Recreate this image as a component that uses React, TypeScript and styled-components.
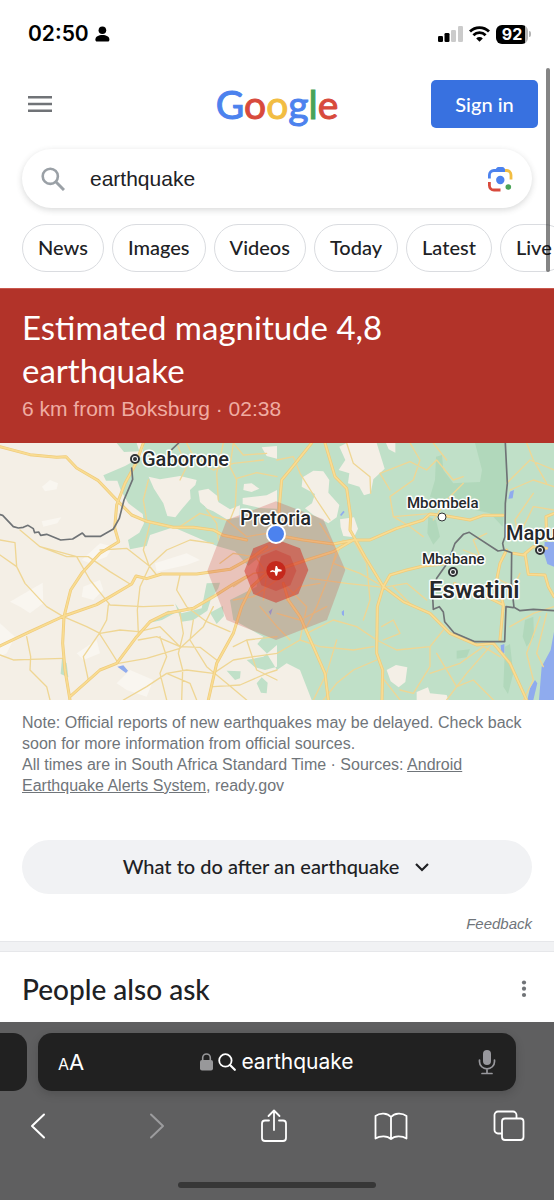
import React from "react";
import styled, { createGlobalStyle } from "styled-components";

const display = `Lato, "Open Sans", sans-serif`;
const body = `"Liberation Sans", Arial, sans-serif`;
const system = `Inter, "Liberation Sans", sans-serif`;

const GlobalStyle = createGlobalStyle`
  *, *::before, *::after { box-sizing: border-box; }
  body { margin: 0; background: #fff; color: #202124; font-family: ${body}; }
  button, input { font: inherit; color: inherit; border: 0; background: none; padding: 0; margin: 0; }
  h1, h2, p { margin: 0; font-weight: 400; }
  a { color: inherit; }
  svg { display: block; flex: none; }
`;

const Screen = styled.div`
  position: relative;
  display: flex;
  flex-direction: column;
  min-height: 100vh;
  overflow: hidden;
`;

const StatusBar = styled.div`
  display: flex;
  align-items: center;
  justify-content: space-between;
  height: 68px;
  padding: 0 23px 0 28px;
  font-family: ${system};
  color: #000;
`;

const StatusGroup = styled.div<{ $gap: number }>`
  display: flex;
  align-items: center;
  gap: ${(p) => p.$gap}px;
`;

const Clock = styled.time`
  font-size: 21px;
  font-weight: 600;
  line-height: 24px;
`;

const Battery = styled.div`
  display: flex;
  align-items: center;
  gap: 1px;
`;

const BatteryLevel = styled.span`
  display: flex;
  align-items: center;
  justify-content: center;
  width: 32px;
  height: 19px;
  border-radius: 6px;
  background: linear-gradient(to right, #000 92%, #b4b4b4 92%);
  color: #fff;
  font-size: 16px;
  font-weight: 700;
  line-height: 19px;
`;

const BatteryCap = styled.span`
  width: 2px;
  height: 6px;
  border-radius: 0 2px 2px 0;
  background: #b4b4b4;
`;

const Scrollbar = styled.div`
  position: absolute;
  top: 68px;
  right: 4px;
  width: 4px;
  height: 204px;
  border-radius: 2px;
  background: rgba(0, 0, 0, 0.48);
`;

const Header = styled.header`
  display: grid;
  grid-template-columns: 1fr auto 1fr;
  align-items: center;
  padding: 12px 16px 0;
`;

const IconButton = styled.button`
  display: flex;
  align-items: center;
  justify-content: center;
  justify-self: start;
`;

const MenuButton = styled(IconButton)`
  width: 48px;
  height: 48px;
`;

const Logo = styled.a`
  font-family: ${display};
  font-size: 39px;
  line-height: 48px;
  text-decoration: none;
`;

const LogoLetter = styled.span<{ $color: string }>`
  color: ${(p) => p.$color};
  -webkit-text-stroke: 1px ${(p) => p.$color};
`;

const SignIn = styled.button`
  justify-self: end;
  width: 107px;
  height: 48px;
  border-radius: 5px;
  background: #3871e0;
  color: #fff;
  font-family: ${display};
  font-size: 20px;
  font-weight: 500;
`;

const SearchForm = styled.form`
  display: flex;
  align-items: center;
  height: 59px;
  margin: 21px 22px 0;
  padding: 0 19px;
  border-radius: 30px;
  background: #fff;
  box-shadow: 0 2px 6px rgba(60, 64, 67, 0.2);
`;

const SearchInput = styled.input`
  flex: 1;
  min-width: 0;
  margin-left: 25px;
  font-size: 21px;
  outline: none;
`;

const Chips = styled.nav`
  display: flex;
  gap: 8px;
  padding: 16px 0 16px 22px;
  overflow: hidden;
`;

const Chip = styled.a`
  flex: none;
  height: 48px;
  padding: 0 15px;
  border: 1px solid #dadce0;
  border-radius: 24px;
  font-family: ${display};
  font-size: 20px;
  font-weight: 500;
  line-height: 45px;
  text-decoration: none;
`;

const Alert = styled.section`
  padding: 17px 22px 20px;
  border-top: 1px solid #c9574d;
  background: #b23329;
  color: #fff;
`;

const AlertTitle = styled.h1`
  max-width: 420px;
  font-family: ${display};
  font-size: 33px;
  line-height: 43px;
`;

const AlertMeta = styled.p`
  padding-top: 3px;
  font-size: 21px;
  line-height: 28px;
  color: #efaca2;
`;

const MapSvg = styled.svg`
  width: 100%;
  height: 257px;
`;

const MapLabel = styled.text<{ $size: number; $weight?: number }>`
  font-family: Roboto, sans-serif;
  font-size: ${(p) => p.$size}px;
  font-weight: ${(p) => p.$weight ?? 500};
  fill: #25282b;
  stroke: #fff;
  stroke-width: 3px;
  stroke-linejoin: round;
  paint-order: stroke;
`;

const Note = styled.p`
  padding: 12px 22px 0;
  font-size: 16px;
  line-height: 21px;
  color: #70757a;
`;

const Expander = styled.button`
  display: flex;
  align-items: center;
  justify-content: center;
  gap: 14px;
  height: 54px;
  margin: 44px 22px 0;
  padding-bottom: 3px;
  border-radius: 27px;
  background: #f1f2f4;
  font-family: ${display};
  font-size: 20px;
  font-weight: 500;
`;

const Feedback = styled.a`
  align-self: flex-end;
  margin: 20px 22px 7px;
  font-size: 15px;
  font-style: italic;
  line-height: 20px;
  color: #70757a;
  text-decoration: none;
`;

const Divider = styled.div`
  height: 11px;
  border: 1px solid #e6e7ea;
  border-width: 1px 0;
  background: #f1f2f4;
`;

const AskRow = styled.section`
  display: flex;
  flex: 1;
  align-items: center;
  justify-content: space-between;
  min-height: 66px;
  padding: 4px 22px 0;
`;

const AskTitle = styled.h2`
  font-family: ${display};
  font-size: 28px;
  font-weight: 500;
  line-height: 32px;
`;

const BrowserBar = styled.footer`
  padding-top: 11px;
  background: #5f5f60;
  color: #fff;
  font-family: ${system};
`;

const TabStrip = styled.div`
  display: flex;
  gap: 11px;
  padding-right: 38px;
`;

const NeighbourTab = styled.div`
  width: 27px;
  height: 58px;
  border-radius: 0 14px 14px 0;
  background: #212121;
`;

const AddressBar = styled.div`
  display: grid;
  flex: 1;
  grid-template-columns: 1fr auto 1fr;
  align-items: center;
  height: 58px;
  padding: 0 20px;
  border-radius: 14px;
  background: #212121;
  box-shadow: 0 3px 10px rgba(0, 0, 0, 0.15);
`;

const TextSize = styled.button`
  justify-self: start;
  padding-top: 2px;
  font-size: 22px;
  line-height: 26px;
`;

const SmallA = styled.span`
  font-size: 16px;
`;

const Address = styled.button`
  display: flex;
  align-items: center;
  gap: 5px;
  font-size: 21px;
  line-height: 28px;
`;

const MicButton = styled.button`
  justify-self: end;
`;

const Toolbar = styled.div`
  display: flex;
  align-items: center;
  justify-content: space-between;
  height: 70px;
  padding: 0 21px 0 14px;
`;

const ToolButton = styled(IconButton)`
  width: 48px;
  height: 48px;
`;

const HomeIndicator = styled.div`
  width: 198px;
  height: 6px;
  margin: 21px auto 12px;
  border-radius: 3px;
  background: #373737;
`;

const LOGO: [string, string][] = [
  ["G", "#4c82ee"],
  ["o", "#d84a3c"],
  ["o", "#f2bd42"],
  ["g", "#4c82ee"],
  ["l", "#4aa358"],
  ["e", "#d84a3c"],
];

const CHIPS = ["News", "Images", "Videos", "Today", "Latest", "Live"];

const GREEN_LAND = [
  "M350 9H410L418 34 372 36Z",
  "M432 9 425 50 375 78 310 106 318 122 352 122 362 150 385 190 428 222 432 250 418 278 384 300 390 328 440 318 450 285 520 262 600 296 650 318 705 334 745 378 780 350 770 440 690 480 700 540 790 590 772 612 800 640 831 690 860 670 900 690 935 780H1662V9Z",
  "M450 548 505 512 530 516 486 540Z",
  "M525 490 545 520 605 505 620 430 660 428 655 445 632 480 622 512 580 540 545 545Z",
  "M630 518 668 498 672 528 650 552Z",
  "M740 660 790 650 831 615 831 680 795 690 765 682Z",
  "M680 692 722 694 720 715 705 720Z",
  "M785 712 803 728 800 760 783 758 770 730Z",
  "M186 655 200 670 205 712 182 702Z",
];

const CREAM_LAND = [
  "M446 110 480 118 540 108 590 120 586 135 570 150 572 176 545 208 526 232 502 228 490 190 462 146Z",
  "M595 152 625 146 652 168 655 186 690 208 720 196 718 232 680 238 640 214 622 206 600 186Z",
  "M732 132 755 130 778 146 755 156 730 150Z",
  "M728 174 800 166 831 150 831 206 780 204 728 192Z",
  "M785 22 831 18V56L800 48Z",
  "M1018 20 1040 9H1130L1154 86 1120 118 1112 160 1092 166 1078 140 1044 130 1048 100 1016 90 1036 60Z",
  "M908 112 940 92 970 94 988 120 985 158 1018 195 1010 232 985 250 940 225 915 205 936 190 945 162 905 140Z",
  "M1020 238 1062 232 1074 266 1062 292 1030 288 1022 262Z",
  "M1158 9H1186V38L1166 28Z",
  "M1160 690 1188 675 1222 682 1216 726 1196 742 1172 724Z",
  "M1250 756 1284 742 1290 760 1340 765 1345 780H1250Z",
];

const PALE_PATCHES = [
  "M126 140 150 120 174 130 170 148 135 154Z",
  "M125 244 184 232 172 250 130 260Z",
  "M245 360 300 310 340 320 320 350 270 370Z",
  "M30 485 128 428 130 490 90 520 60 500Z",
  "M250 440 300 420 310 450 280 480 245 470Z",
  "M0 550 45 590 20 640 0 650Z",
  "M350 730 390 690 460 720 440 770 380 750Z",
  "M230 640 290 600 300 640 250 660Z",
  "M465 370 560 340 600 360 560 375 470 395Z",
];

const DEEP_GREEN = [
  "M1425 9H1516L1522 120 1508 260 1470 220 1380 200 1290 170 1305 120 1308 50 1326 45 1330 90 1360 130 1385 128 1440 126 1446 90Z",
  "M1285 230 1308 240 1320 290 1300 314 1282 280Z",
  "M1575 540 1600 530 1602 590 1580 620 1568 590Z",
  "M1515 620 1530 612 1540 700 1524 762 1510 740Z",
  "M1370 632 1410 628 1400 652 1370 656Z",
  "M598 170 620 148 648 168 638 196 612 200Z",
];

const MINOR_ROADS = [
  "M0 300 45 308 50 380 75 430 140 500 190 530",
  "M0 345 50 380M60 270 120 320 200 350 265 350 330 395 390 432",
  "M120 320 230 350 270 420 310 470 330 495 430 500 520 496",
  "M450 250 430 330 448 380 420 440 412 510 415 580",
  "M300 330 380 325 448 378 470 405M448 378 500 330 570 300 640 310",
  "M190 530 260 560 300 580 360 570 415 575 480 560 540 620",
  "M325 495 320 540 298 580 250 650 265 720M298 580 330 630 355 670",
  "M80 590 92 650 90 690 140 740 150 780M0 645 40 660 90 658 190 655",
  "M540 405 530 450 560 500 620 545 690 575",
  "M540 520 550 580 535 640 548 690 545 780",
  "M370 780 440 740 500 700 560 690 640 700 700 660 760 650 831 640",
  "M415 600 470 590 540 620 600 622 650 660",
  "M480 590 500 650 480 700 500 780M355 670 440 655 540 625 610 560 640 500",
  "M580 540 570 600 620 680 680 730 740 780M590 780 570 730 500 700",
  "M700 620 740 600 831 590M740 600 770 690 831 720M640 740 720 735 800 700 831 690",
  "M445 120 430 180 440 240M540 120 560 80 530 9M655 180 650 100 670 9",
  "M700 9 690 80 710 120 706 200 690 240M710 115 770 98 831 110",
  "M560 9 580 50 640 90 700 70 790 60M620 210 650 250 655 300",
  "M700 9 730 45 800 40M540 260 600 220 680 240",
  "M831 320 760 350 700 340 660 370M680 240 740 290 800 280",
  "M831 60 880 50 900 100 950 180 990 240M1040 9 1060 70 1110 110 1112 160",
  "M1170 150 1140 100 1230 65 1280 90 1310 60 1360 120 1390 110",
  "M1230 9 1260 60 1240 120 1170 170 1180 230 1230 260 1270 290",
  "M1180 230 1300 220M1340 60 1300 9M1390 130 1340 180 1300 240",
  "M1060 300 1100 370 1110 480 1090 540M930 415 1040 430 1150 442 1220 430 1280 480",
  "M960 250 1010 330 990 400 950 500 920 560M1030 300 1000 370 1080 400 1150 440",
  "M920 580 1000 540 1070 560 1130 600 1190 630 1290 620 1330 570",
  "M831 640 900 600 960 620 1060 630 1120 620M900 600 920 500 850 430",
  "M970 780 1010 730 1060 690 1130 660M1145 710 1200 780M1010 600 980 700 940 780",
  "M1290 620 1290 680 1240 760 1200 750M1290 700 1380 670 1450 620 1500 650",
  "M1145 560 1180 540 1200 580 1150 600M1180 440 1240 500 1290 520",
  "M1310 640 1370 740 1420 720 1480 780M1470 620 1400 700 1340 780",
  "M1390 330 1440 350 1420 300 1460 280M1450 460 1500 420 1540 440 1560 400",
  "M1520 130 1590 60 1662 90M1530 150 1600 120 1662 140M1580 9 1600 60 1640 130",
  "M1560 280 1600 200 1662 210M1560 300 1545 240 1600 160M1530 560 1600 520 1662 500",
  "M1620 530 1580 640 1600 720 1570 780M1640 520 1610 640 1630 680",
  "M700 440 760 400 831 392M831 420 760 470 700 480M760 340 800 400 790 480",
  "M860 480 900 440 960 430M831 520 900 540 980 500M780 500 831 560 870 600",
];

const MAJOR_ROADS = [
  "M0 20 90 44 170 52 198 50 230 84 295 122 350 180 395 225 440 244 520 262 580 262 640 270 670 286 740 300",
  "M430 9 408 70 375 130 350 195 344 264 356 305 300 340 245 400 212 450 192 530 188 610 195 690 210 780",
  "M0 618 90 575 192 528 290 494 395 432 408 408 440 416 485 402 590 402 690 388 760 350 800 320",
  "M210 770 300 690 350 670 410 590 450 545 500 520 580 505 640 470 700 432 740 410",
  "M625 780 650 670 700 580 725 500 755 440 800 400",
  "M935 9 870 90 845 120 838 200 834 300",
  "M975 9 1005 110 1040 145 1052 230 1050 270 1070 305 1095 350 1150 440 1210 485 1290 520 1350 580 1430 615 1480 610 1530 670 1580 780",
  "M855 290 910 300 1000 312 1060 300 1110 300 1190 265 1270 240 1290 222 1340 228 1410 240 1450 226 1510 226",
  "M831 390 920 360 1000 335 1060 300",
  "M1150 440 1132 500 1130 640 1148 690 1146 780",
  "M1150 440 1170 405 1220 390 1270 378 1330 372",
  "M1364 430 1390 450 1440 460 1510 495 1500 600",
  "M1510 495 1490 420 1500 370 1520 330M1540 340 1570 345 1600 320 1640 325",
  "M1575 340 1585 403 1635 405 1645 440 1662 470M1640 300 1638 230 1662 220",
  "M850 430 865 480 900 530 940 620 975 700 985 780",
];

const BORDERS = [
  "M0 224 8 226 40 260 55 264 70 262 84 256 100 266 104 278 116 276 122 286 140 283 182 300 218 297 247 279 256 289 302 289 340 267 358 235 372 180 398 118 395 84 M515 29 536 9",
  "M1516 9 1522 130 1516 190 1515 290 1508 310 1512 330 1535 338 1534 430 1542 502 1560 512 1600 508 1662 512",
  "M1512 330 1494 333 1408 277 1390 283 1365 310 1345 365 1310 415 1298 470 1300 508 1318 500 1330 516 1334 545 1362 578 1425 605H1514L1518 500 1540 503",
];

const WATER = [
  "M1662 306H1634L1632 340 1642 372 1662 380Z",
  "M1662 575 1652 630 1625 680 1617 780H1662Z",
  "M1582 780 1590 745 1605 720 1612 730 1600 780Z",
  "M352 680 370 676 384 692 378 699Z",
  "M1020 225 1030 212 1034 216 1024 228Z",
  "M1025 515 1032 510 1032 528 1026 524Z",
  "M806 515 818 505 812 525Z",
  "M1530 155 1542 150 1538 175 1525 176Z",
  "M1502 616 1513 612V638L1504 640Z",
];

function QuakeMap() {
  return (
    <MapSvg viewBox="0 0 554 257" preserveAspectRatio="xMidYMid slice" role="img" aria-label="Map of the earthquake area">
      <g transform="scale(0.33333) translate(0 -9)" fill="none" strokeLinejoin="round" strokeLinecap="round">
        <rect x="0" y="0" width="1662" height="790" fill="#f4efe6" />
        <path d={PALE_PATCHES.join("")} fill="#f9f6f0" />
        <path d={GREEN_LAND.join("")} fill="#c0e0c8" />
        <path d={DEEP_GREEN.join("")} fill="#b1d8bb" />
        <path d={CREAM_LAND.join("")} fill="#f4efe6" />
        <path d={WATER.join("")} fill="#8fabee" />
        <path d={MINOR_ROADS.join("")} stroke="#efd694" strokeWidth="4" />
        <path d={MAJOR_ROADS.join("")} stroke="#efcb7a" strokeWidth="9" />
        <path d={MAJOR_ROADS.join("")} stroke="#f9dc92" strokeWidth="5" />
        <path d={BORDERS.join("")} stroke="#6f7376" strokeWidth="5" />
        <path d="M828 184 970 238 1036 390 981 540 828 600 680 540 622 392 680 240Z" fill="#c8382d" fillOpacity="0.24" />
        <path d="M828 298 900 325 925 390 895 462 828 488 760 462 733 393 760 325Z" fill="#d2281e" fillOpacity="0.5" />
        <path d="M828 330 871 348 889 392 871 436 828 453 784 436 767 392 784 348Z" fill="#c8281e" fillOpacity="0.3" />
        <circle cx="828" cy="392" r="29" fill="#c5281c" />
        <path
          d="M811 393 818 390 824 393 827 378H831L834 386 845 389V394L834 395 831 407H827L824 397 818 395 811 397Z"
          fill="#fff"
        />
      </g>
      <g fill="#fff" stroke="#303336">
        <circle cx="135" cy="16" r="4" strokeWidth="2" />
        <circle cx="135" cy="16" r="2" fill="#303336" stroke="none" />
        <circle cx="442" cy="74" r="4" strokeWidth="1" />
        <circle cx="453" cy="129" r="4" strokeWidth="2" />
        <circle cx="453" cy="129" r="2" fill="#303336" stroke="none" />
        <circle cx="540" cy="107" r="4" strokeWidth="2" />
        <circle cx="540" cy="107" r="2" fill="#303336" stroke="none" />
      </g>
      <MapLabel x="142" y="23" $size={20}>Gaborone</MapLabel>
      <MapLabel x="240" y="82" $size={20}>Pretoria</MapLabel>
      <MapLabel x="407" y="65" $size={15}>Mbombela</MapLabel>
      <MapLabel x="422" y="121" $size={15}>Mbabane</MapLabel>
      <MapLabel x="429" y="155" $size={24} $weight={600}>Eswatini</MapLabel>
      <MapLabel x="506" y="97" $size={20}>Mapu</MapLabel>
      <circle cx="276" cy="91" r="9" fill="#4c82ee" stroke="#fff" strokeWidth="2" />
    </MapSvg>
  );
}

export default function App() {
  return (
    <Screen>
      <GlobalStyle />
      <StatusBar>
        <StatusGroup $gap={6}>
          <Clock>02:50</Clock>
          <svg width="15" height="16" viewBox="0 0 15 16" aria-hidden="true">
            <circle cx="7.4" cy="4.2" r="3.8" />
            <path d="M0.4 13.400C0.4 10.800 3.500 9 7.400 9S14.400 10.800 14.400 13.400C14.400 14.800 13.800 15.500 12.800 15.500H2C1 15.500 0.4 14.800 0.4 13.400Z" />
          </svg>
        </StatusGroup>
        <StatusGroup $gap={6}>
          <svg width="25" height="16" viewBox="0 0 25 16" aria-hidden="true">
            <rect x="0" y="10" width="5" height="6" rx="1.3" />
            <rect x="6.500" y="7" width="5" height="9" rx="1.3" />
            <rect x="13" y="4" width="5" height="12" rx="1.3" fill="#cbcbcb" />
            <rect x="20" y="0" width="5" height="16" rx="1.3" fill="#cbcbcb" />
          </svg>
          <svg width="21" height="16" viewBox="0 0 21 16" fill="none" stroke="#000" strokeWidth="2.800" aria-hidden="true">
            <path d="M1 5.600a13.500 13.500 0 0 1 19 0" />
            <path d="M4.400 9.200a8.700 8.700 0 0 1 12.200 0" />
            <path d="M7.200 12.400a4.700 4.700 0 0 1 6.600 0L10.500 15.800Z" fill="#000" stroke="none" />
          </svg>
          <Battery>
            <BatteryLevel>92</BatteryLevel>
            <BatteryCap />
          </Battery>
        </StatusGroup>
      </StatusBar>

      <Header>
        <MenuButton type="button" aria-label="Main menu">
          <svg width="24" height="18" viewBox="0 0 24 18" fill="#707377" aria-hidden="true">
            <path d="M0 1h24v2.600H0zM0 7.700h24v2.600H0zM0 14.400h24V17H0z" />
          </svg>
        </MenuButton>
        <Logo href="#" aria-label="Google">
          {LOGO.map(([letter, color], i) => (
            <LogoLetter key={i} $color={color}>{letter}</LogoLetter>
          ))}
        </Logo>
        <SignIn type="button">Sign in</SignIn>
      </Header>

      <SearchForm role="search" onSubmit={(e) => e.preventDefault()}>
        <svg width="24" height="24" viewBox="0 0 24 24" fill="none" stroke="#9aa0a6" aria-hidden="true">
          <circle cx="9.300" cy="9.300" r="7.600" strokeWidth="2.600" />
          <path d="M14.800 14.800 23 23" strokeWidth="3" />
        </svg>
        <SearchInput aria-label="Search" defaultValue="earthquake" />
        <IconButton type="button" aria-label="Search by image">
          <svg width="26" height="26" viewBox="0 0 26 26" fill="none" strokeWidth="2.800" aria-hidden="true">
            <path d="M2.400 12.500V9a4.500 4.500 0 0 1 4.500-4.500H18" stroke="#4c82ee" />
            <path d="M7.500 5 9.500 2q.7-1 1.900-1h4q1.200 0 1.900 1L19.300 5v1H7.500Z" fill="#4c82ee" />
            <path d="M18 4.500h1.500A4.500 4.500 0 0 1 24 9v4.500" stroke="#f2bd42" />
            <path d="M2.400 16v3.500A4.500 4.500 0 0 0 6.900 24h6.600" stroke="#d84a3c" />
            <circle cx="13.300" cy="14" r="4.200" fill="#4c82ee" />
            <circle cx="21.300" cy="21" r="2.800" fill="#4aa358" />
          </svg>
        </IconButton>
      </SearchForm>

      <Chips aria-label="Search filters">
        {CHIPS.map((label) => (
          <Chip key={label} href="#">{label}</Chip>
        ))}
      </Chips>

      <Alert>
        <AlertTitle>Estimated magnitude 4,8 earthquake</AlertTitle>
        <AlertMeta>6 km from Boksburg · 02:38</AlertMeta>
      </Alert>

      <QuakeMap />

      <Note>
        Note: Official reports of new earthquakes may be delayed. Check back soon for more information from official
        sources.
        <br />
        All times are in South Africa Standard Time · Sources: <a href="#">Android Earthquake Alerts System</a>,
        ready.gov
      </Note>

      <Expander type="button" aria-expanded="false">
        What to do after an earthquake
        <svg width="18" height="18" viewBox="0 0 18 18" fill="none" stroke="#202124" strokeWidth="2.200" aria-hidden="true">
          <path d="m3 7 6 6 6-6" />
        </svg>
      </Expander>
      <Feedback href="#">Feedback</Feedback>

      <Divider />

      <AskRow>
        <AskTitle>People also ask</AskTitle>
        <IconButton type="button" aria-label="More options">
          <svg width="16" height="18" viewBox="0 0 16 18" fill="#707377" aria-hidden="true">
            <circle cx="8" cy="2.500" r="2.100" />
            <circle cx="8" cy="8.700" r="2.100" />
            <circle cx="8" cy="15" r="2.100" />
          </svg>
        </IconButton>
      </AskRow>

      <BrowserBar>
        <TabStrip>
          <NeighbourTab />
          <AddressBar>
            <TextSize type="button" aria-label="Page settings">
              <SmallA>A</SmallA>A
            </TextSize>
            <Address type="button">
              <svg width="13" height="18" viewBox="0 0 13 18" aria-hidden="true">
                <rect x="0" y="7" width="13" height="10.500" rx="2" fill="#98989a" />
                <path d="M2.700 8V4.800a3.800 3.800 0 0 1 7.600 0V8" fill="none" stroke="#98989a" strokeWidth="1.600" />
              </svg>
              <svg width="18" height="18" viewBox="0 0 18 18" fill="none" stroke="#fff" strokeWidth="1.800" strokeLinecap="round" aria-hidden="true">
                <circle cx="7.400" cy="7.400" r="6.200" />
                <path d="m12 12 4.800 4.800" strokeWidth="2.200" />
              </svg>
              earthquake
            </Address>
            <MicButton type="button" aria-label="Dictate">
              <svg width="18" height="26" viewBox="0 0 18 26" fill="none" stroke="#98989d" strokeWidth="1.700" strokeLinecap="round" aria-hidden="true">
                <rect x="5" y="1" width="8" height="15" rx="4" fill="#98989d" stroke="none" />
                <path d="M1.500 11v1.800a7.500 7 0 0 0 15 0V11M9 20v4M4 24.500h10" />
              </svg>
            </MicButton>
          </AddressBar>
        </TabStrip>
        <Toolbar>
          <ToolButton type="button" aria-label="Back">
            <svg width="20" height="28" viewBox="0 0 20 28" fill="none" stroke="#fff" strokeWidth="2" strokeLinecap="round" strokeLinejoin="round">
              <path d="M16 2.500 4 14l12 11.500" />
            </svg>
          </ToolButton>
          <ToolButton type="button" aria-label="Forward">
            <svg width="20" height="28" viewBox="0 0 20 28" fill="none" stroke="#9c9c9e" strokeWidth="2" strokeLinecap="round" strokeLinejoin="round">
              <path d="m5 2.500 12 11.500L5 25.500" />
            </svg>
          </ToolButton>
          <ToolButton type="button" aria-label="Share">
            <svg width="28" height="34" viewBox="0 0 28 34" fill="none" stroke="#fff" strokeWidth="1.800" strokeLinecap="round" strokeLinejoin="round">
              <path d="M9 11.500H5a3 3 0 0 0-3 3V29a3 3 0 0 0 3 3h18a3 3 0 0 0 3-3V14.500a3 3 0 0 0-3-3h-4M14 21V2M8.500 7 14 1.500 19.500 7" />
            </svg>
          </ToolButton>
          <ToolButton type="button" aria-label="Bookmarks">
            <svg width="34" height="28" viewBox="0 0 34 28" fill="none" stroke="#fff" strokeWidth="1.800" strokeLinecap="round" strokeLinejoin="round">
              <path d="M17 5C13.500 1 6 .5 1.500 4v22.500C6 23.500 13.500 23.500 17 27c3.500-3.500 11-3.500 15.500-.5V4C28 .5 20.500 1 17 5ZM17 5v22" />
            </svg>
          </ToolButton>
          <ToolButton type="button" aria-label="Tabs">
            <svg width="32" height="32" viewBox="0 0 32 32" fill="none" stroke="#fff" strokeWidth="1.800" strokeLinejoin="round">
              <rect x="9" y="8.500" width="21.500" height="21.500" rx="3" />
              <path d="M9 23.500H5a3.500 3.500 0 0 1-3.500-3.500V5A3.500 3.500 0 0 1 5 1.500h15A3.500 3.500 0 0 1 23.500 5v3.500" />
            </svg>
          </ToolButton>
        </Toolbar>
        <HomeIndicator />
      </BrowserBar>
      <Scrollbar />
    </Screen>
  );
}
